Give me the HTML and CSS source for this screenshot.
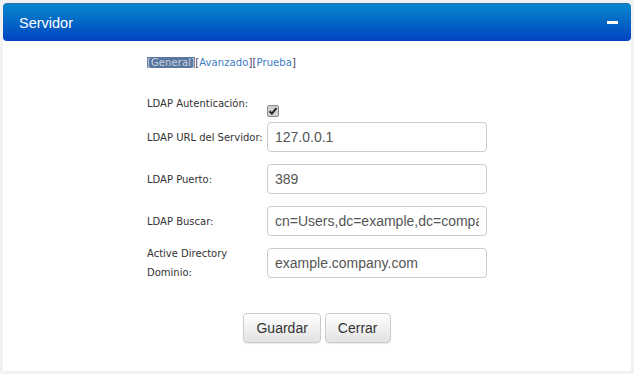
FILE: index.html
```html
<!DOCTYPE html>
<html lang="es">
<head>
    <meta charset="UTF-8">
    <title>Servidor</title>
    <link rel="stylesheet" href="styles.css">
</head>
<body>
<div class="panel">
    <div class="panel-head">
        <span class="panel-title">Servidor</span>
        <span class="collapse"></span>
    </div>

    <div class="panel-body">
        <div class="tabs">
            <span class="tab active">[General]</span><span class="br">[</span><a href="#">Avanzado</a><span class="br">]</span><span class="br">[</span><a href="#">Prueba</a><span class="br">]</span>
        </div>

        <form class="settings">
            <div class="row row-check">
                <label>LDAP Autenticación:</label>
                <span class="check">
                    <svg width="12" height="12" viewBox="0 0 12 12">
                        <rect x="0.5" y="0.5" width="11" height="11" rx="1.5" fill="#d0d0d0" stroke="#8a8a8a"/>
                        <path d="M2.6 6.2 L4.9 8.6 L9.4 3.2" fill="none" stroke="#222" stroke-width="2"/>
                    </svg>
                </span>
            </div>
            <div class="row">
                <label for="ldapUrl" class="nowrap">LDAP URL del Servidor:</label>
                <input type="text" id="ldapUrl" value="127.0.0.1">
            </div>
            <div class="row">
                <label for="ldapPort">LDAP Puerto:</label>
                <input type="text" id="ldapPort" value="389">
            </div>
            <div class="row">
                <label for="ldapSearch">LDAP Buscar:</label>
                <input type="text" id="ldapSearch" value="cn=Users,dc=example,dc=company,dc=com">
            </div>
            <div class="row">
                <label for="adDomain">Active Directory Dominio:</label>
                <input type="text" id="adDomain" value="example.company.com">
            </div>

            <div class="actions">
                <button type="button">Guardar</button>
                <button type="button">Cerrar</button>
            </div>
        </form>
    </div>
</div>
</body>
</html>
```

FILE: styles.css
```css
body {
    margin: 0;
    padding: 3px 3px 0 3px;
    background: #f2f2f2;
    font-family: "DejaVu Sans", Verdana, sans-serif;
}

.panel {
    background: #fff;
    height: 368px;
}

.panel-head {
    height: 38px;
    display: flex;
    align-items: center;
    justify-content: space-between;
    padding: 0 16px;
    border-radius: 4px;
    background: linear-gradient(#0787cb, #0044c1);
    border-top: 1px solid #2a6fae;
    box-sizing: border-box;
}

.panel-title {
    color: #fff;
    font-family: "Liberation Sans", Arial, sans-serif;
    font-size: 14.5px;
}

.collapse {
    width: 11px;
    height: 3px;
    background: #fff;
    margin-right: -3px;
}

.panel-body {
    width: 340px;
    margin: 0 auto;
    padding-top: 15px;
}

.tabs {
    font-size: 10px;
    line-height: 14px;
    letter-spacing: 0.1px;
    color: #4a3a6a;
}

.tabs a {
    color: #3a7cc6;
    text-decoration: none;
}

.tab.active {
    background: #5a76a0;
    color: #c9d1de;
}

.settings {
    margin-top: 28px;
}

.row {
    display: flex;
    align-items: center;
    height: 30px;
    margin-bottom: 12px;
}

.row label {
    width: 120px;
    font-size: 10px;
    line-height: 19px;
    color: #333;
}

.row label.nowrap {
    white-space: nowrap;
}

.row-check {
    align-items: flex-start;
    height: 24px;
    margin-bottom: 0;
}

.row-check label {
    line-height: 12px;
}

.check {
    margin-top: 7px;
}

.check svg {
    display: block;
}

.row input {
    width: 220px;
    height: 30px;
    box-sizing: border-box;
    border: 1px solid #ccc;
    border-radius: 4px;
    padding: 0 7px;
    font-family: "Liberation Sans", Arial, sans-serif;
    font-size: 14px;
    color: #555;
}

.actions {
    display: flex;
    justify-content: center;
    gap: 4px;
    margin-top: 35px;
}

.actions button {
    font-family: "Liberation Sans", Arial, sans-serif;
    font-size: 14px;
    color: #333;
    line-height: 18px;
    padding: 5px 12px;
    border: 1px solid #ccc;
    border-radius: 4px;
    background: linear-gradient(#fff, #e2e2e2);
    box-shadow: 0 1px 1px rgba(0, 0, 0, 0.08);
}
```
